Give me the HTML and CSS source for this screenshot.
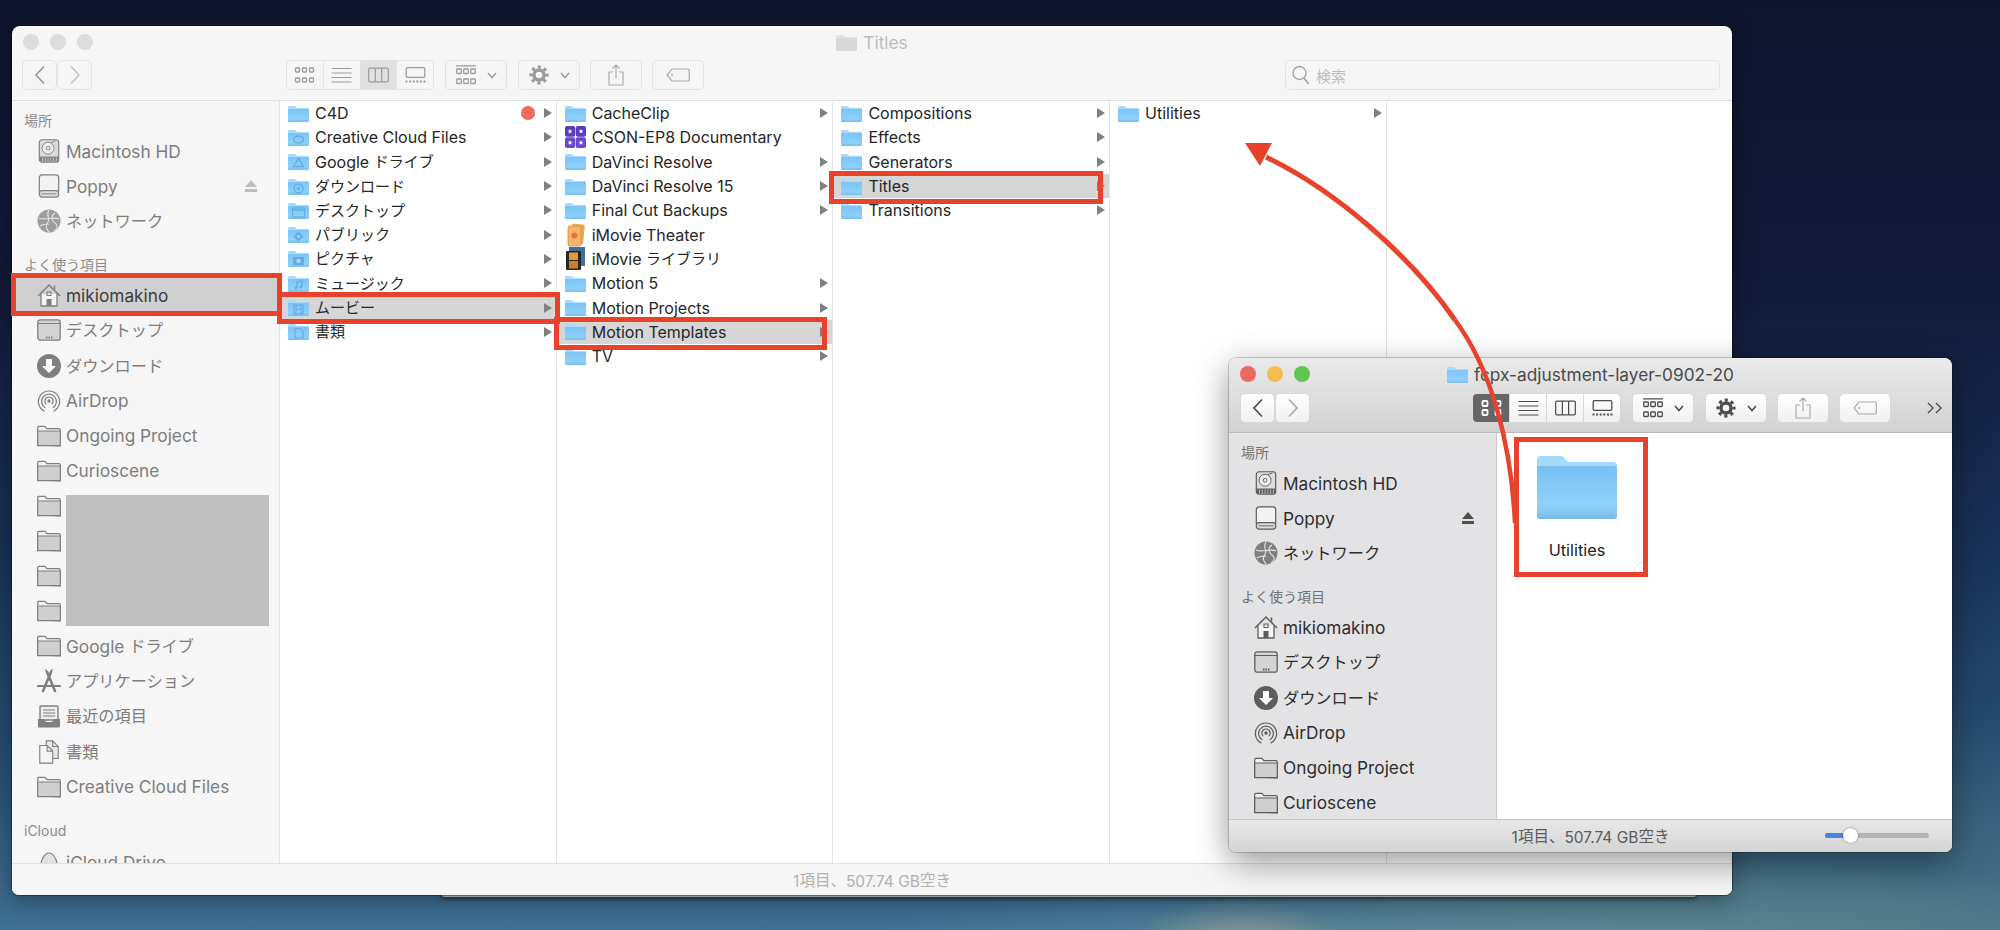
FILE: index.html
```html
<!DOCTYPE html>
<html lang="ja">
<head>
<meta charset="utf-8">
<title>Titles</title>
<link rel="stylesheet" href="styles.css">
</head>
<body>
<svg class="sprite" xmlns="http://www.w3.org/2000/svg">
  <defs>
    <linearGradient id="gf" x1="0" y1="0" x2="0" y2="1"><stop offset="0" stop-color="#7cc4f5"/><stop offset=".75" stop-color="#8dd0fb"/><stop offset="1" stop-color="#79bdec"/></linearGradient>
    <symbol id="f" viewBox="0 0 21 17"><path fill="#a9dcfc" d="M0 2a1 1 0 0 1 1-1h6l2 2h11a1 1 0 0 1 1 1v3H0z"/><path fill="url(#gf)" d="M0 4h21v12a1 1 0 0 1-1 1H1a1 1 0 0 1-1-1z"/></symbol>
    <symbol id="f-gray" viewBox="0 0 21 17"><path fill="#e2e2e2" d="M0 2a1 1 0 0 1 1-1h6l2 2h11a1 1 0 0 1 1 1v3H0z"/><path fill="#d8d8d8" d="M0 4h21v12a1 1 0 0 1-1 1H1a1 1 0 0 1-1-1z"/></symbol>
    <symbol id="f-cc" viewBox="0 0 21 17"><use href="#f"/><ellipse cx="10.500" cy="10.500" rx="5" ry="3.500" fill="none" stroke="#62ade6" stroke-width="1.400"/></symbol>
    <symbol id="f-gd" viewBox="0 0 21 17"><use href="#f"/><path d="M10.500 5.500l5 8h-10z" fill="none" stroke="#62ade6" stroke-width="1.400"/></symbol>
    <symbol id="f-dl" viewBox="0 0 21 17"><use href="#f"/><circle cx="10.500" cy="10.500" r="4.500" fill="none" stroke="#62ade6" stroke-width="1.300"/><path d="M9.800 8h1.400v2.200h1.600l-2.300 2.500-2.300-2.500h1.600z" fill="#62ade6"/></symbol>
    <symbol id="f-dt" viewBox="0 0 21 17"><use href="#f"/><rect x="4.500" y="6" width="12" height="9" fill="none" stroke="#62ade6" stroke-width="1.200"/><path d="M4.500 8h12" stroke="#62ade6" stroke-width="1.400"/></symbol>
    <symbol id="f-pb" viewBox="0 0 21 17"><use href="#f"/><path d="M10.500 5.500l5 5-5 5-5-5z" fill="#62ade6"/><circle cx="10.500" cy="10.500" r="1.400" fill="#a9dcfc"/></symbol>
    <symbol id="f-pc" viewBox="0 0 21 17"><use href="#f"/><rect x="5" y="7" width="11" height="8" rx="1" fill="#62ade6"/><circle cx="10.500" cy="11" r="2.200" fill="#a9dcfc"/></symbol>
    <symbol id="f-mu" viewBox="0 0 21 17"><use href="#f"/><path d="M9 13V7l5-1v6" fill="none" stroke="#62ade6" stroke-width="1.300"/><circle cx="7.800" cy="13" r="1.400" fill="#62ade6"/><circle cx="12.800" cy="12" r="1.400" fill="#62ade6"/></symbol>
    <symbol id="f-mv" viewBox="0 0 21 17"><use href="#f"/><rect x="6" y="6" width="9" height="9" fill="none" stroke="#62ade6" stroke-width="1.200"/><path d="M8 6v9M13 6v9M8 10.500h5" stroke="#62ade6"/></symbol>
    <symbol id="f-dc" viewBox="0 0 21 17"><use href="#f"/><path d="M7 5.500h5l3 3v6.500H7z" fill="none" stroke="#62ade6" stroke-width="1.200"/></symbol>
    <symbol id="a-cson" viewBox="0 0 21 22"><rect x="0" y="0" width="10.200" height="10.700" rx="2" fill="#5a3cc4"/><rect x="10.800" y="0" width="10.200" height="10.700" rx="2" fill="#5a3cc4"/><rect x="0" y="11.300" width="10.200" height="10.700" rx="2" fill="#6a48cf"/><rect x="10.800" y="11.300" width="10.200" height="10.700" rx="2" fill="#6a48cf"/><g fill="#fff"><path id="st" d="M5 2.800l.7 1.600 1.700.2-1.300 1.100.4 1.700L5 6.500l-1.500.900.400-1.700-1.300-1.100 1.700-.200z"/><use href="#st" x="11"/><use href="#st" y="11.300"/><use href="#st" x="11" y="11.300"/></g></symbol>
    <symbol id="a-thr" viewBox="0 0 21 24"><rect x="6" y="1" width="13" height="20" rx="2" fill="#e9a657" transform="rotate(6 12 11)"/><rect x="3" y="3" width="13" height="20" rx="2" fill="#f3b56c" stroke="#d78f3e" stroke-width=".8"/><circle cx="9.500" cy="12.500" r="3" fill="#e8713c"/></symbol>
    <symbol id="a-lib" viewBox="0 0 21 24"><rect x="4" y="0" width="16" height="19" fill="#3f6f9c"/><rect x="1" y="4" width="15" height="19" rx="1" fill="#262626"/><rect x="4" y="5.500" width="9" height="7.500" fill="#e39a32"/><rect x="4" y="14" width="9" height="7.500" fill="#c97f22"/></symbol>

    <symbol id="s-hd" viewBox="0 0 24 26"><rect x="1.500" y=".8" width="21" height="24.400" rx="3" fill="#dcdcdc" stroke="currentColor" stroke-width="1.300"/><circle cx="11" cy="10" r="6.500" fill="#eee" stroke="currentColor"/><circle cx="11" cy="10" r="2" fill="none" stroke="currentColor"/><path d="M14 4l5-2" stroke="currentColor"/><rect x="2" y="19" width="20" height="5.500" fill="currentColor"/><path d="M5 20v4M8 20v4M11 20v4M14 20v4M17 20v4M20 20v4" stroke="#ddd" stroke-width=".8"/></symbol>
    <symbol id="s-drv" viewBox="0 0 24 26"><path d="M1.500 19V4a3 3 0 0 1 3-3h15a3 3 0 0 1 3 3v15" fill="#f2f2f2" stroke="currentColor" stroke-width="1.300"/><rect x="1.500" y="18" width="21" height="7" rx="3" fill="#dcdcdc" stroke="currentColor" stroke-width="1.300"/><path d="M4 21.500h16" stroke="currentColor"/></symbol>
    <symbol id="s-net" viewBox="0 0 24 24"><circle cx="12" cy="12" r="11.500" fill="currentColor" opacity=".75"/><g fill="none" stroke="#e4e4e4" stroke-width="1.100"><path d="M2 9c6 3 14-2 20 1M12 1c-4 6 2 8-1 12s-2 7 1 10M18 4c-5 3-3 8 0 10s3 6-1 8M3 17c4-3 7-1 9-2"/></g></symbol>
    <symbol id="s-home" viewBox="0 0 24 24"><path d="M4 11v12h16V11" fill="#f4f4f4" stroke="currentColor" stroke-width="1.300"/><path d="M1 13L12 2l11 11" fill="none" stroke="currentColor" stroke-width="1.500"/><path d="M17.500 2.500v4" stroke="currentColor" stroke-width="1.500"/><rect x="9.500" y="16" width="5" height="7" fill="currentColor"/><rect x="10" y="9" width="4" height="3.500" fill="none" stroke="currentColor"/></symbol>
    <symbol id="s-desk" viewBox="0 0 24 22"><rect x=".8" y=".8" width="22.400" height="20.400" rx="2.500" fill="#d4d4d4" stroke="currentColor" stroke-width="1.300"/><path d="M1 4.500h22" stroke="currentColor"/><path d="M9 18.500h7" stroke="currentColor" stroke-width="2" stroke-dasharray="1.500 1"/></symbol>
    <symbol id="s-dl" viewBox="0 0 24 24"><circle cx="12" cy="12" r="12" fill="currentColor"/><path d="M9 5h6v7h4l-7 7-7-7h4z" fill="#fff"/></symbol>
    <symbol id="s-air" viewBox="0 0 24 26"><g fill="none" stroke="currentColor" stroke-width="1.300"><path d="M7 24A11.500 11.500 0 1 1 17 24"/><path d="M8 20.500A8 8 0 1 1 16 20.500"/><path d="M9 16.500A4.500 4.500 0 1 1 15 16.500"/></g><circle cx="12" cy="13" r="1.800" fill="currentColor"/></symbol>
    <symbol id="s-fold" viewBox="0 0 24 21"><path d="M.7 19.500V2a1.200 1.200 0 0 1 1.200-1.200h6l2 2.400h12a1.400 1.400 0 0 1 1.400 1.400v15.700z" fill="#f2f2f2" stroke="currentColor" stroke-width="1.200"/><path d="M.7 5.500h22.600v14.700H.7z" fill="#cfcfcf" stroke="currentColor" stroke-width="1.200"/></symbol>
    <symbol id="s-app" viewBox="0 0 24 24"><g stroke="currentColor" fill="none" stroke-linecap="round"><path d="M6 22L14 3M18 22L10 3" stroke-width="2.600"/><path d="M1 17h22" stroke-width="2.200"/><path d="M9 1l3 6 3-6" stroke-width="1.600"/></g></symbol>
    <symbol id="s-rec" viewBox="0 0 24 24"><path d="M4 2h16a1 1 0 0 1 1 1v13H3V3a1 1 0 0 1 1-1z" fill="#eee" stroke="currentColor" stroke-width="1.400"/><path d="M6 6h12M6 9h12M6 12h12" stroke="currentColor"/><path d="M1 15h6l2 3h6l2-3h6v7a1.500 1.500 0 0 1-1.500 1.500h-19A1.500 1.500 0 0 1 1 22z" fill="currentColor"/></symbol>
    <symbol id="s-doc" viewBox="0 0 24 26"><path d="M9 1h7l6 6v13H9z" fill="#e8e8e8" stroke="currentColor" stroke-width="1.200"/><path d="M2 6h8l6 6v13H2z" fill="#f4f4f4" stroke="currentColor" stroke-width="1.200"/><path d="M10 6v6h6M16 1v6h6" fill="none" stroke="currentColor" stroke-width="1.200"/></symbol>
    <symbol id="s-cld" viewBox="0 0 24 24"><path d="M5 23a4 4 0 0 1-1.500-7.800C4 9 7.500 2 12 2s8 7 8.500 13.200A4 4 0 0 1 19 23z" fill="#e2e2e2" stroke="currentColor" stroke-width="1.200"/></symbol>
    <symbol id="s-ej" viewBox="0 0 12 12"><path d="M6 0l6 7H0z" fill="currentColor"/><rect y="9" width="12" height="3" fill="currentColor"/></symbol>

    <symbol id="t-ico" viewBox="0 0 20 16"><g fill="none" stroke="currentColor" stroke-width="1.300"><rect x="1" y="1" width="4" height="4" rx=".8"/><rect x="8" y="1" width="4" height="4" rx=".8"/><rect x="15" y="1" width="4" height="4" rx=".8"/><rect x="1" y="11" width="4" height="4" rx=".8"/><rect x="8" y="11" width="4" height="4" rx=".8"/><rect x="15" y="11" width="4" height="4" rx=".8"/></g></symbol>
    <symbol id="t-ico2" viewBox="0 0 20 16"><g fill="none" stroke="currentColor" stroke-width="1.800"><rect x="1" y="1" width="5" height="5" rx="1"/><rect x="14" y="1" width="5" height="5" rx="1"/><rect x="1" y="10" width="5" height="5" rx="1"/><rect x="14" y="10" width="5" height="5" rx="1"/></g></symbol>
    <symbol id="t-list" viewBox="0 0 20 16"><path d="M0 1.500h20M0 6h20M0 10.500h20M0 15h20" stroke="currentColor" stroke-width="1.200"/></symbol>
    <symbol id="t-col" viewBox="0 0 22 16"><rect x=".7" y=".7" width="20.600" height="14.600" rx="1.500" fill="none" stroke="currentColor" stroke-width="1.300"/><path d="M7.700 1v14M14.300 1v14" stroke="currentColor" stroke-width="1.300"/></symbol>
    <symbol id="t-gal" viewBox="0 0 20 16"><rect x=".7" y=".7" width="18.600" height="9.600" rx="1.200" fill="none" stroke="currentColor" stroke-width="1.300"/><path d="M0 14.500h20" stroke="currentColor" stroke-width="2" stroke-dasharray="2 1.600"/></symbol>
    <symbol id="t-arr" viewBox="0 0 20 20"><path d="M0 .8h20" stroke="currentColor" stroke-width="1.200"/><g fill="none" stroke="currentColor" stroke-width="1.300"><rect x=".7" y="4" width="4.600" height="4.500" rx=".8"/><rect x="7.700" y="4" width="4.600" height="4.500" rx=".8"/><rect x="14.700" y="4" width="4.600" height="4.500" rx=".8"/><rect x=".7" y="14" width="4.600" height="4.500" rx=".8"/><rect x="7.700" y="14" width="4.600" height="4.500" rx=".8"/><rect x="14.700" y="14" width="4.600" height="4.500" rx=".8"/></g></symbol>
    <symbol id="t-chev" viewBox="0 0 10 7"><path d="M1 1l4 4.500L9 1" fill="none" stroke="currentColor" stroke-width="1.500"/></symbol>
    <symbol id="t-gear" viewBox="0 0 20 20"><circle cx="10" cy="10" r="5" fill="none" stroke="currentColor" stroke-width="3.400"/><circle cx="10" cy="10" r="8" fill="none" stroke="currentColor" stroke-width="3.200" stroke-dasharray="3.100 3.180" stroke-dashoffset="1.500"/></symbol>
    <symbol id="t-share" viewBox="0 0 16 22"><path d="M5 8H1v13h14V8h-4" fill="none" stroke="currentColor" stroke-width="1.200"/><path d="M8 14V1M4.500 4.500L8 1l3.500 3.500" fill="none" stroke="currentColor" stroke-width="1.200"/></symbol>
    <symbol id="t-tag" viewBox="0 0 24 14"><path d="M6 1h16a1.300 1.300 0 0 1 1.300 1.300v9.400A1.300 1.300 0 0 1 22 13H6L1 7z" fill="none" stroke="currentColor" stroke-width="1.200"/><circle cx="6" cy="7" r="1" fill="currentColor"/></symbol>
    <symbol id="t-back" viewBox="0 0 12 20"><path d="M10 1.500L2 10l8 8.500" fill="none" stroke="currentColor" stroke-width="1.700"/></symbol>
    <symbol id="t-fwd" viewBox="0 0 12 20"><path d="M2 1.500L10 10l-8 8.500" fill="none" stroke="currentColor" stroke-width="1.700"/></symbol>
    <symbol id="t-search" viewBox="0 0 18 20"><circle cx="7.500" cy="8" r="6.500" fill="none" stroke="currentColor" stroke-width="1.400"/><path d="M12 13l4.500 6" stroke="currentColor" stroke-width="1.600"/></symbol>
    <symbol id="t-more" viewBox="0 0 16 12"><path d="M1 1l5 5-5 5M9 1l5 5-5 5" fill="none" stroke="currentColor" stroke-width="1.400"/></symbol>
    <linearGradient id="gb" x1="0" y1="0" x2="0" y2="1"><stop offset="0" stop-color="#79bff2"/><stop offset=".72" stop-color="#8ed2fb"/><stop offset=".85" stop-color="#86c9f3"/><stop offset="1" stop-color="#7ab8e6"/></linearGradient>
    <symbol id="f-big" viewBox="0 0 80 63"><path fill="#a4d9fb" d="M0 4a4 4 0 0 1 4-4h20a4 4 0 0 1 3 1.500L31 6h45a4 4 0 0 1 4 4v10H0z"/><path fill="url(#gb)" d="M0 10h76a4 4 0 0 1 4 4v46a3 3 0 0 1-3 3H3a3 3 0 0 1-3-3z"/></symbol>
  </defs>
</svg>

<div class="ghost"></div>

<section class="win back">
  <header class="top">
    <div class="titlebar">
      <div class="lights"><i></i><i></i><i></i></div>
      <div class="title"><svg class="fi"><use href="#f-gray"/></svg><span>Titles</span></div>
      <div></div>
    </div>
    <div class="tools">
      <div class="nav"><button class="btn"><svg class="ic-nav"><use href="#t-back"/></svg></button><button class="btn"><svg class="ic-nav dim"><use href="#t-fwd"/></svg></button></div>
      <div class="seg">
        <span class="sg"><svg class="ic-v"><use href="#t-ico"/></svg></span>
        <span class="sg"><svg class="ic-v"><use href="#t-list"/></svg></span>
        <span class="sg on"><svg class="ic-v"><use href="#t-col"/></svg></span>
        <span class="sg"><svg class="ic-v"><use href="#t-gal"/></svg></span>
      </div>
      <button class="btn pop"><svg class="ic-a"><use href="#t-arr"/></svg><svg class="ic-c"><use href="#t-chev"/></svg></button>
      <button class="btn pop"><svg class="ic-a"><use href="#t-gear"/></svg><svg class="ic-c"><use href="#t-chev"/></svg></button>
      <button class="btn act"><svg class="ic-s"><use href="#t-share"/></svg></button>
      <button class="btn act"><svg class="ic-t"><use href="#t-tag"/></svg></button>
      <div class="search"><svg class="ic-q"><use href="#t-search"/></svg><span>検索</span></div>
    </div>
  </header>
  <div class="main">
    <aside class="side">
      <h4 class="head">場所</h4>
      <div class="sr"><svg class="si"><use href="#s-hd"/></svg><span>Macintosh HD</span></div>
      <div class="sr"><svg class="si"><use href="#s-drv"/></svg><span>Poppy</span><svg class="ej"><use href="#s-ej"/></svg></div>
      <div class="sr"><svg class="si"><use href="#s-net"/></svg><span class="j">ネットワーク</span></div>
      <h4 class="head gap">よく使う項目</h4>
      <div class="sr cur"><svg class="si"><use href="#s-home"/></svg><span>mikiomakino</span></div>
      <div class="sr"><svg class="si"><use href="#s-desk"/></svg><span class="j">デスクトップ</span></div>
      <div class="sr"><svg class="si"><use href="#s-dl"/></svg><span class="j">ダウンロード</span></div>
      <div class="sr"><svg class="si"><use href="#s-air"/></svg><span>AirDrop</span></div>
      <div class="sr"><svg class="si"><use href="#s-fold"/></svg><span>Ongoing Project</span></div>
      <div class="sr"><svg class="si"><use href="#s-fold"/></svg><span>Curioscene</span></div>
      <div class="sr"><svg class="si"><use href="#s-fold"/></svg></div>
      <div class="sr"><svg class="si"><use href="#s-fold"/></svg></div>
      <div class="sr"><svg class="si"><use href="#s-fold"/></svg></div>
      <div class="sr"><svg class="si"><use href="#s-fold"/></svg></div>
      <div class="sr"><svg class="si"><use href="#s-fold"/></svg><span>Google <span class="j">ドライブ</span></span></div>
      <div class="sr"><svg class="si"><use href="#s-app"/></svg><span class="j">アプリケーション</span></div>
      <div class="sr"><svg class="si"><use href="#s-rec"/></svg><span class="j">最近の項目</span></div>
      <div class="sr"><svg class="si"><use href="#s-doc"/></svg><span class="j">書類</span></div>
      <div class="sr"><svg class="si"><use href="#s-fold"/></svg><span>Creative Cloud Files</span></div>
      <h4 class="head gap2">iCloud</h4>
      <div class="sr"><svg class="si"><use href="#s-cld"/></svg><span>iCloud Drive</span></div>
      <div class="redact"></div>
    </aside>
    <div class="col">
      <div class="row"><svg class="fi"><use href="#f"/></svg><span class="nm">C4D</span><i class="dot"></i><i class="tri"></i></div>
      <div class="row"><svg class="fi"><use href="#f-cc"/></svg><span class="nm">Creative Cloud Files</span><i class="tri"></i></div>
      <div class="row"><svg class="fi"><use href="#f-gd"/></svg><span class="nm">Google <span class="j">ドライブ</span></span><i class="tri"></i></div>
      <div class="row"><svg class="fi"><use href="#f-dl"/></svg><span class="nm j">ダウンロード</span><i class="tri"></i></div>
      <div class="row"><svg class="fi"><use href="#f-dt"/></svg><span class="nm j">デスクトップ</span><i class="tri"></i></div>
      <div class="row"><svg class="fi"><use href="#f-pb"/></svg><span class="nm j">パブリック</span><i class="tri"></i></div>
      <div class="row"><svg class="fi"><use href="#f-pc"/></svg><span class="nm j">ピクチャ</span><i class="tri"></i></div>
      <div class="row"><svg class="fi"><use href="#f-mu"/></svg><span class="nm j">ミュージック</span><i class="tri"></i></div>
      <div class="row sel"><svg class="fi"><use href="#f-mv"/></svg><span class="nm j">ムービー</span><i class="tri"></i></div>
      <div class="row"><svg class="fi"><use href="#f-dc"/></svg><span class="nm j">書類</span><i class="tri"></i></div>
    </div>
    <div class="col">
      <div class="row"><svg class="fi"><use href="#f"/></svg><span class="nm">CacheClip</span><i class="tri"></i></div>
      <div class="row"><svg class="fi tall"><use href="#a-cson"/></svg><span class="nm">CSON-EP8 Documentary</span></div>
      <div class="row"><svg class="fi"><use href="#f"/></svg><span class="nm">DaVinci Resolve</span><i class="tri"></i></div>
      <div class="row"><svg class="fi"><use href="#f"/></svg><span class="nm">DaVinci Resolve 15</span><i class="tri"></i></div>
      <div class="row"><svg class="fi"><use href="#f"/></svg><span class="nm">Final Cut Backups</span><i class="tri"></i></div>
      <div class="row"><svg class="fi tall"><use href="#a-thr"/></svg><span class="nm">iMovie Theater</span></div>
      <div class="row"><svg class="fi tall"><use href="#a-lib"/></svg><span class="nm">iMovie <span class="j">ライブラリ</span></span></div>
      <div class="row"><svg class="fi"><use href="#f"/></svg><span class="nm">Motion 5</span><i class="tri"></i></div>
      <div class="row"><svg class="fi"><use href="#f"/></svg><span class="nm">Motion Projects</span><i class="tri"></i></div>
      <div class="row sel"><svg class="fi"><use href="#f"/></svg><span class="nm">Motion Templates</span><i class="tri"></i></div>
      <div class="row"><svg class="fi"><use href="#f"/></svg><span class="nm">TV</span><i class="tri"></i></div>
    </div>
    <div class="col">
      <div class="row"><svg class="fi"><use href="#f"/></svg><span class="nm">Compositions</span><i class="tri"></i></div>
      <div class="row"><svg class="fi"><use href="#f"/></svg><span class="nm">Effects</span><i class="tri"></i></div>
      <div class="row"><svg class="fi"><use href="#f"/></svg><span class="nm">Generators</span><i class="tri"></i></div>
      <div class="row sel"><svg class="fi"><use href="#f"/></svg><span class="nm">Titles</span><i class="tri"></i></div>
      <div class="row"><svg class="fi"><use href="#f"/></svg><span class="nm">Transitions</span><i class="tri"></i></div>
    </div>
    <div class="col">
      <div class="row"><svg class="fi"><use href="#f"/></svg><span class="nm">Utilities</span><i class="tri"></i></div>
    </div>
    <div class="col last"></div>
  </div>
  <footer class="status"><span>1<span class="j">項目、</span>507.74 GB<span class="j">空き</span></span></footer>
</section>

<section class="win front">
  <header class="top">
    <div class="titlebar">
      <div class="lights"><i class="r"></i><i class="y"></i><i class="g"></i></div>
      <div class="title"><svg class="fi"><use href="#f"/></svg><span>fcpx-adjustment-layer-0902-20</span></div>
      <div></div>
    </div>
    <div class="tools">
      <div class="nav"><button class="btn"><svg class="ic-nav"><use href="#t-back"/></svg></button><button class="btn"><svg class="ic-nav dim"><use href="#t-fwd"/></svg></button></div>
      <div class="seg">
        <span class="sg on"><svg class="ic-v"><use href="#t-ico2"/></svg></span>
        <span class="sg"><svg class="ic-v"><use href="#t-list"/></svg></span>
        <span class="sg"><svg class="ic-v"><use href="#t-col"/></svg></span>
        <span class="sg"><svg class="ic-v"><use href="#t-gal"/></svg></span>
      </div>
      <button class="btn pop"><svg class="ic-a"><use href="#t-arr"/></svg><svg class="ic-c"><use href="#t-chev"/></svg></button>
      <button class="btn pop"><svg class="ic-a"><use href="#t-gear"/></svg><svg class="ic-c"><use href="#t-chev"/></svg></button>
      <button class="btn act"><svg class="ic-s"><use href="#t-share"/></svg></button>
      <button class="btn act"><svg class="ic-t"><use href="#t-tag"/></svg></button>
      <svg class="ic-more"><use href="#t-more"/></svg>
    </div>
  </header>
  <div class="main">
    <aside class="side">
      <h4 class="head">場所</h4>
      <div class="sr"><svg class="si"><use href="#s-hd"/></svg><span>Macintosh HD</span></div>
      <div class="sr"><svg class="si"><use href="#s-drv"/></svg><span>Poppy</span><svg class="ej"><use href="#s-ej"/></svg></div>
      <div class="sr"><svg class="si"><use href="#s-net"/></svg><span class="j">ネットワーク</span></div>
      <h4 class="head gap">よく使う項目</h4>
      <div class="sr"><svg class="si"><use href="#s-home"/></svg><span>mikiomakino</span></div>
      <div class="sr"><svg class="si"><use href="#s-desk"/></svg><span class="j">デスクトップ</span></div>
      <div class="sr"><svg class="si"><use href="#s-dl"/></svg><span class="j">ダウンロード</span></div>
      <div class="sr"><svg class="si"><use href="#s-air"/></svg><span>AirDrop</span></div>
      <div class="sr"><svg class="si"><use href="#s-fold"/></svg><span>Ongoing Project</span></div>
      <div class="sr"><svg class="si"><use href="#s-fold"/></svg><span>Curioscene</span></div>
    </aside>
    <div class="icons">
      <figure class="item"><svg class="big"><use href="#f-big"/></svg><figcaption>Utilities</figcaption></figure>
    </div>
  </div>
  <footer class="status"><span>1<span class="j">項目、</span>507.74 GB<span class="j">空き</span></span><span class="slider"><i class="fill"></i><i class="knob"></i></span></footer>
</section>

<div class="mark m-home"></div>
<div class="mark m-movie"></div>
<div class="mark m-tmpl"></div>
<div class="mark m-titles"></div>
<div class="mark m-util"></div>

<svg class="arrow" viewBox="0 0 2000 930" xmlns="http://www.w3.org/2000/svg">
  <path d="M1266 157C1335 190 1410 255 1455 320" fill="none" stroke="#e8432a" stroke-width="5"/>
  <path d="M1455 320C1490 367 1511 440 1515 523" fill="none" stroke="#e8432a" stroke-width="4.500"/>
  <path d="M1245 143H1272L1260 166z" fill="#e8432a"/>
</svg>
</body>
</html>
```
FILE: styles.css
```css
* { box-sizing: border-box; }
html, body { margin: 0; height: 100%; }
body {
  width: 2000px; height: 930px; overflow: hidden; position: relative;
  font-family: Inter, "Noto Sans CJK JP", sans-serif;
  background:
    radial-gradient(ellipse 110px 45px at 1240px 945px, rgba(190,180,140,.55), rgba(190,180,140,0)),
    radial-gradient(ellipse 700px 110px at 1550px 960px, rgba(110,150,150,.75), rgba(110,150,150,0)),
    radial-gradient(ellipse 600px 260px at 1900px 960px, rgba(80,115,120,.65), rgba(80,115,120,0)),
    linear-gradient(180deg, #10152f 0, #121a39 300px, #1a3358 560px, #2a5275 780px, #3f7196 930px);
}
.sprite { position: absolute; width: 0; height: 0; }

.ghost {
  position: absolute; left: 441px; top: 700px; width: 1256px; height: 197px;
  background: #c8c8c8; border-radius: 0 0 4px 4px; box-shadow: 0 2px 4px rgba(0,0,0,.5);
}

.win {
  position: absolute; display: flex; flex-direction: column; overflow: hidden;
  border-radius: 8px 8px 7px 7px;
}
.back {
  left: 12px; top: 26px; width: 1720px; height: 869px; background: #f6f6f6;
  box-shadow: 0 0 0 1px rgba(0,0,0,.35), 0 6px 24px rgba(0,0,0,.35);
  --btn-bg: #f6f6f6; --btn-line: #e3e3e3; --ic: #9b9b9b; --ic-dim: #c4c4c4;
  --side: #f6f6f6; --side-tx: #7d7d7d; --si: #7f7f7f; --head: #8b8b8b; --line: #e2e2e2;
}
.front {
  left: 1229px; top: 358px; width: 723px; height: 494px; background: #fff;
  box-shadow: 0 0 0 1px rgba(0,0,0,.18), 0 10px 34px rgba(0,0,0,.42);
  --btn-bg: linear-gradient(#ffffff, #f1f1f1); --btn-line: #d8d8d8; --ic: #4d4d4d; --ic-dim: #a9a9a9;
  --side: #e3e3e5; --side-tx: #2e2e2e; --si: #5d5d5d; --head: #717171; --line: #c8c8c8;
}

/* title + toolbar */
.top { flex: none; height: 75px; border-bottom: 1px solid #dedede; display: flex; flex-direction: column; }
.front .top { background: linear-gradient(#eaeaea, #d2d2d2); border-bottom-color: #b9b9b9; }
.titlebar { display: grid; grid-template-columns: 1fr auto 1fr; align-items: center; height: 34px; padding-bottom: 2px; }
.front .titlebar { height: 35px; padding-bottom: 3px; }
.lights { display: flex; gap: 11px; padding-left: 11px; }
.lights i { width: 16px; height: 16px; border-radius: 50%; background: #dcdcdc; }
.lights .r { background: #ee6a5f; }
.lights .y { background: #f5bd4f; }
.lights .g { background: #61c454; }
.title { display: flex; align-items: center; gap: 6px; font-size: 17.300px; color: #bcbcbc; }
.front .title { color: #4a4a4a; }

.tools { display: flex; align-items: stretch; height: 30px; padding-left: 10px; }
.front .tools { padding-left: 11px; }
.btn {
  display: flex; align-items: center; justify-content: center; padding: 0; margin: 0;
  background: var(--btn-bg); border: 1px solid var(--btn-line); border-radius: 5px; color: var(--ic);
}
.nav { display: flex; }
.nav .btn { width: 35px; }
.seg {
  display: flex; margin-left: 194px; width: 148px; border: 1px solid var(--btn-line); border-radius: 5px; overflow: hidden;
  background: var(--btn-bg); color: var(--ic);
}
.front .seg { margin-left: 162px; width: 149px; }
.sg { flex: 1; display: flex; align-items: center; justify-content: center; border-left: 1px solid var(--btn-line); }
.sg:first-child { border-left: 0; }
.back .sg.on { background: #e0e0e0; }
.front .sg.on { background: #666; color: #fff; }
.pop { width: 62px; margin-left: 11px; gap: 11px; }
.act { width: 52px; margin-left: 10px; }
.ic-nav { width: 12px; height: 20px; }
.dim { color: var(--ic-dim); }
.ic-v { width: 21px; height: 16px; }
.ic-a { width: 20px; height: 20px; }
.ic-c { width: 10px; height: 7px; }
.ic-s { width: 16px; height: 22px; color: #a9a9a9; }
.ic-t { width: 24px; height: 14px; color: #a9a9a9; }
.ic-more { width: 16px; height: 12px; margin: auto 9px auto auto; color: #4d4d4d; }
.search {
  margin-left: auto; margin-right: 12px; width: 435px; display: flex; align-items: center; gap: 6px; padding-left: 6px;
  border: 1px solid #e4e4e4; border-radius: 5px; font-size: 15px; color: #bdbdbd;
}
.ic-q { width: 18px; height: 20px; color: #a5a5a5; }

/* body */
.main { flex: 1; display: flex; min-height: 0; background: #fff; }
.side {
  flex: none; width: 268px; position: relative; overflow: hidden; padding-top: 5.500px;
  background: var(--side); border-right: 1px solid var(--line);
}
.head { margin: 0; height: 27px; line-height: 27px; padding-left: 12px; font-size: 14px; font-weight: 400; color: var(--head); }
.head.gap { margin-top: 12px; }
.head.gap2 { margin-top: 13px; margin-bottom: 1px; }
.j { display: inline-block; transform: translateY(-1px); }
.sr {
  display: flex; align-items: center; height: 35.100px; padding-left: 25px; font-size: 17.250px; color: var(--side-tx); white-space: nowrap;
}
.sr .j { font-size: 16.200px; }
.sr.cur { background: #d0d0d0; color: #3d3d3d; }
.si { flex: none; width: 24px; height: 24px; margin-right: 5px; color: var(--si); }
.ej { width: 12px; height: 12px; margin-left: auto; margin-right: 22px; color: #bdbdbd; }
.front .ej { color: #4f4f4f; }
.redact { position: absolute; left: 54px; top: 393.500px; width: 203px; height: 131px; background: #bfbfbf; }

.col { flex: none; width: 276.700px; border-right: 1px solid #e4e4e4; }
.col.last { flex: 1; border: 0; }
.row { display: flex; align-items: center; height: 24.300px; padding-left: 8px; font-size: 16px; color: #262626; white-space: nowrap; }
.row.sel { background: #d6d6d6; }
.row .j { font-size: 15px; }
.fi { flex: none; width: 21px; height: 17px; }
.fi.tall { height: 24px; }
.nm { margin-left: 6px; }
.tri {
  margin-left: auto; margin-right: 4px; width: 0; height: 0;
  border-left: 8px solid #808080; border-top: 5px solid transparent; border-bottom: 5px solid transparent;
}
.dot { margin-left: auto; margin-right: 9px; width: 14px; height: 14px; border-radius: 50%; background: #ee6a5f; }
.dot + .tri { margin-left: 0; }

.icons { flex: 1; padding: 23px 0 0 15px; }
.item { margin: 0; width: 130px; display: flex; flex-direction: column; align-items: center; }
.big { width: 80px; height: 63px; }
.item figcaption { margin-top: 21px; line-height: 20px; font-size: 16.300px; color: #222; }

/* status */
.status {
  flex: none; height: 32px; display: flex; align-items: center; justify-content: center; position: relative;
  border-top: 1px solid #e1e1e1; background: #f6f6f6; font-size: 15.500px; color: #b0b0b0;
}
.front .status { height: 33px; border-top-color: #c6c6c6; background: linear-gradient(#e8e8e8, #d4d4d4); color: #5b5b5b; }
.slider { position: absolute; left: 596px; top: 13px; width: 104px; height: 5px; background: #b4b4b4; border-radius: 3px; }
.fill { position: absolute; left: 0; top: 0; width: 26px; height: 5px; background: #4a82e6; border-radius: 3px 0 0 3px; }
.knob { position: absolute; left: 18px; top: -5px; width: 15px; height: 15px; border-radius: 50%; background: #fff; box-shadow: 0 0 2px rgba(0,0,0,.5); }

/* annotations */
.mark { position: absolute; border: 5px solid #e8432a; }
.m-home { left: 11px; top: 273px; width: 271px; height: 43px; }
.m-movie { left: 277px; top: 292px; width: 283px; height: 32px; }
.m-tmpl { left: 554px; top: 317px; width: 273px; height: 33px; }
.m-titles { left: 829px; top: 171px; width: 274px; height: 33px; }
.m-util { left: 1514px; top: 437px; width: 134px; height: 140px; }
.arrow { position: absolute; left: 0; top: 0; width: 2000px; height: 930px; pointer-events: none; }
```
